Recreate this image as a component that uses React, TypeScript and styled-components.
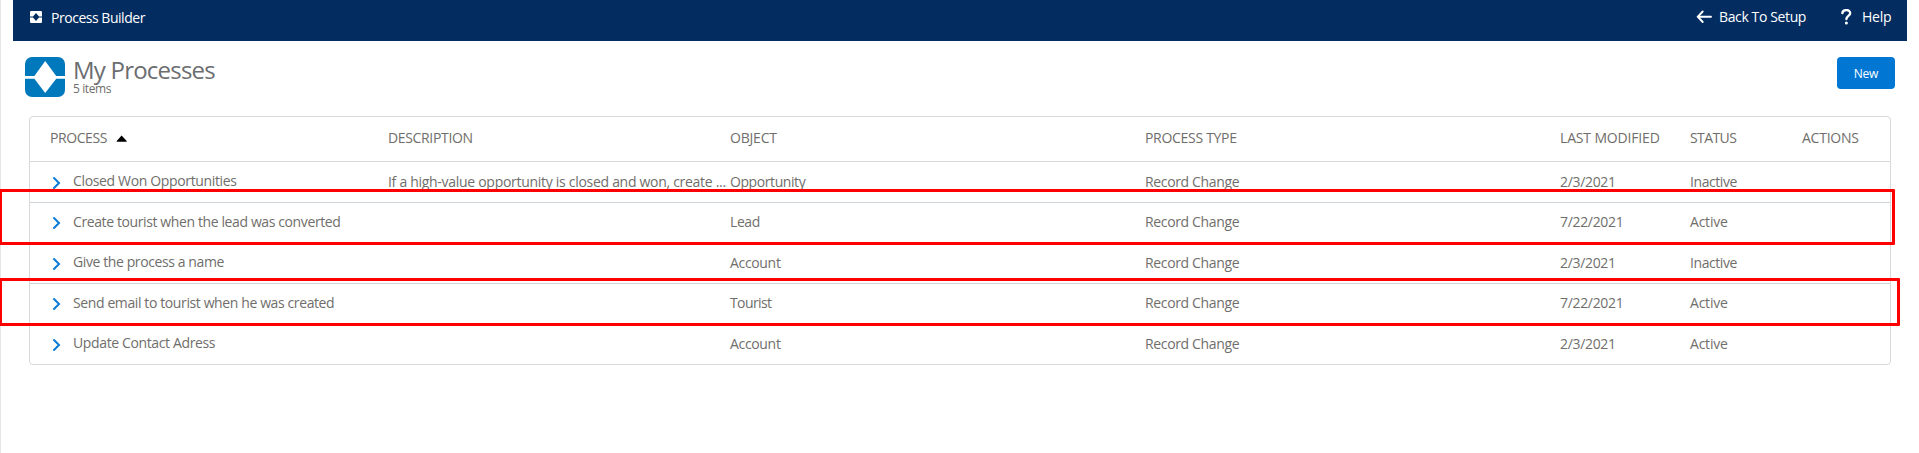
import React from "react";
import styled, { createGlobalStyle } from "styled-components";

const GlobalStyle = createGlobalStyle`
  * { box-sizing: border-box; }
  body {
    margin: 0;
    background: #fff;
    font-family: "Open Sans", "Noto Sans", sans-serif;
    font-size: 14px;
    line-height: 20px;
    color: #706e6b;
    overflow: hidden;
  }
`;

const Page = styled.div`
  position: relative;
  width: 1919px;
  height: 453px;
  padding: 0 12px;
  border-left: 1px solid #e6e6e6;
`;

/* Text run with its own tracking */
const Label = styled.span<{ $track?: number }>`
  letter-spacing: ${(p) => p.$track ?? -0.39}px;
  white-space: nowrap;
`;

const NavBar = styled.header`
  display: flex;
  justify-content: space-between;
  height: 41px;
  padding: 0 16px 0 17px;
  background: #032d60;
  color: #fff;
`;

const Brand = styled.div`
  display: flex;
  gap: 8px;
  height: 36px;
  padding-top: 8px;

  svg { margin-top: 3px; }
`;

const NavLinks = styled.nav`
  display: flex;
  padding-top: 7px;
`;

const NavLink = styled.a<{ $width: number; $gap: number }>`
  display: flex;
  gap: ${(p) => p.$gap}px;
  width: ${(p) => p.$width}px;

  svg { margin-top: 2px; flex: none; }
`;

const PageHeader = styled.section`
  display: flex;
  align-items: flex-start;
  height: 75px;
  padding: 16px 12px 0;
`;

const Titles = styled.div`
  flex: 1;
  padding-left: 8px;
`;

const Title = styled.h1`
  margin: 0;
  font-size: 24px;
  font-weight: 400;
  line-height: 26px;
  color: #6b6d70;
`;

const ItemCount = styled.p`
  margin: 0;
  font-size: 12px;
  line-height: 12px;
`;

const NewButton = styled.button`
  width: 58px;
  height: 32px;
  padding: 1px 0 0;
  border: 0;
  border-radius: 4px;
  background: #0176d3;
  color: #fff;
  font: 400 12px/31px "Open Sans", "Noto Sans", sans-serif;
`;

const Table = styled.div`
  width: 1862px;
  height: 249px;
  margin-left: 16px;
  border: 1px solid #d8d9db;
  border-radius: 4px;
`;

const columns = `
  display: grid;
  grid-template-columns: 338px 342px 415px 415px 130px 112px 1fr;
  padding-left: 20px;
`;

const HeadRow = styled.div`
  ${columns}
  height: 45px;
  padding-top: 11px;
  border-bottom: 1px solid #d8d9db;
`;

const Row = styled.div<{ $height: number; $last: boolean }>`
  ${columns}
  height: ${(p) => p.$height}px;
  border-bottom: ${(p) => (p.$last ? "0" : "1px solid #ced3d8")};
`;

const HeadCell = styled.div`
  display: flex;
  gap: 9px;

  svg { margin-top: 7px; }
`;

const NameCell = styled.div<{ $drop: number }>`
  display: flex;
  gap: 11px;
  padding: 9px 0 0 2px;

  svg { margin-top: ${(p) => 4 + p.$drop}px; }
`;

const Cell = styled.div<{ $drop: number }>`
  padding-top: ${(p) => 9 + p.$drop}px;
`;

const Highlight = styled.div<{ $top: number; $width: number; $height: number }>`
  position: absolute;
  top: ${(p) => p.$top}px;
  left: -2px;
  width: ${(p) => p.$width}px;
  height: ${(p) => p.$height}px;
  border: 3px solid #fe0000;
  border-radius: 1px;
`;

const BrandIcon = () => (
  <svg width="13" height="13" viewBox="0 0 13 13">
    <rect x="0" y="0" width="12" height="12" rx="1.3" fill="#fff" />
    <path d="M6 2 9 5.5h3v1H9L6 10 3 6.5H0v-1h3z" fill="#032d60" />
  </svg>
);

const ProcessIcon = () => (
  <svg width="40" height="40" viewBox="0 0 40 40">
    <rect width="40" height="40" rx="7" fill="#0079bc" />
    <path d="M20.2 4 31.2 19H40v2.7h-8.8L20.2 36 9.4 21.7H0V19h9.4z" fill="#fff" />
  </svg>
);

const ArrowLeft = () => (
  <svg width="16" height="16" viewBox="0 0 16 16" fill="none" stroke="#fff" strokeWidth="1.9">
    <path d="M6.7 2.5 1.8 7.7l4.9 5.3M2 7.7h13" strokeLinecap="round" />
  </svg>
);

const QuestionMark = () => (
  <svg width="11" height="16" viewBox="0 0 11 16">
    <path
      d="M1.4 4.1C1.6 .2 9.2 0 9.2 4.2c0 2.6-3.8 2.8-3.8 5.8"
      fill="none"
      stroke="#fff"
      strokeWidth="2.4"
      strokeLinecap="round"
    />
    <circle cx="5.4" cy="14" r="1.5" fill="#fff" />
  </svg>
);

const SortArrow = () => (
  <svg width="12" height="8" viewBox="0 0 12 8">
    <path d="M5.6.4 10.7 6v.8H.7V6z" fill="#000" />
  </svg>
);

const Chevron = () => (
  <svg width="10" height="14" viewBox="0 0 10 14">
    <path d="m2 2 5 5-5 5" fill="none" stroke="#0b7ad6" strokeWidth="2" strokeLinecap="round" />
  </svg>
);

type Process = {
  name: string;
  nameTrack: number;
  description?: string;
  object: string;
  objectTrack: number;
  modified: string;
  status: "Active" | "Inactive";
};

const processes: Process[] = [
  {
    name: "Closed Won Opportunities",
    nameTrack: -0.35,
    description: "If a high-value opportunity is closed and won, create ...",
    object: "Opportunity",
    objectTrack: -0.42,
    modified: "2/3/2021",
    status: "Inactive",
  },
  {
    name: "Create tourist when the lead was converted",
    nameTrack: -0.39,
    object: "Lead",
    objectTrack: -0.4,
    modified: "7/22/2021",
    status: "Active",
  },
  {
    name: "Give the process a name",
    nameTrack: -0.4,
    object: "Account",
    objectTrack: -0.33,
    modified: "2/3/2021",
    status: "Inactive",
  },
  {
    name: "Send email to tourist when he was created",
    nameTrack: -0.39,
    object: "Tourist",
    objectTrack: -0.6,
    modified: "7/22/2021",
    status: "Active",
  },
  {
    name: "Update Contact Adress",
    nameTrack: -0.37,
    object: "Account",
    objectTrack: -0.33,
    modified: "2/3/2021",
    status: "Active",
  },
];

const rowHeights = [41, 40, 41, 40, 40];

export default function App() {
  return (
    <Page>
      <GlobalStyle />
      <NavBar>
        <Brand>
          <BrandIcon />
          <Label $track={-0.47}>Process Builder</Label>
        </Brand>
        <NavLinks>
          <NavLink $width={145} $gap={7}>
            <ArrowLeft />
            <Label $track={-0.38}>Back To Setup</Label>
          </NavLink>
          <NavLink $width={50} $gap={10}>
            <QuestionMark />
            <Label $track={-0.2}>Help</Label>
          </NavLink>
        </NavLinks>
      </NavBar>

      <PageHeader>
        <ProcessIcon />
        <Titles>
          <Title>
            <Label $track={-0.78}>My Processes</Label>
          </Title>
          <ItemCount>
            <Label $track={-0.4}>5 items</Label>
          </ItemCount>
        </Titles>
        <NewButton>
          <Label $track={-0.2}>New</Label>
        </NewButton>
      </PageHeader>

      <Table>
        <HeadRow>
          <HeadCell>
            <Label $track={-0.43}>PROCESS</Label>
            <SortArrow />
          </HeadCell>
          <HeadCell><Label $track={-0.34}>DESCRIPTION</Label></HeadCell>
          <HeadCell><Label $track={-0.2}>OBJECT</Label></HeadCell>
          <HeadCell><Label $track={-0.3}>PROCESS TYPE</Label></HeadCell>
          <HeadCell><Label $track={-0.16}>LAST MODIFIED</Label></HeadCell>
          <HeadCell><Label $track={-0.6}>STATUS</Label></HeadCell>
          <HeadCell><Label $track={-0.25}>ACTIONS</Label></HeadCell>
        </HeadRow>
        {processes.map((p, i) => {
          const drop = i % 2 === 0 ? 1 : 0;
          return (
            <Row key={p.name} $height={rowHeights[i]} $last={i === processes.length - 1}>
              <NameCell $drop={drop}>
                <Chevron />
                <Label $track={p.nameTrack}>{p.name}</Label>
              </NameCell>
              <Cell $drop={drop}>
                {p.description && <Label $track={-0.29}>{p.description}</Label>}
              </Cell>
              <Cell $drop={drop}><Label $track={p.objectTrack}>{p.object}</Label></Cell>
              <Cell $drop={drop}><Label $track={-0.35}>Record Change</Label></Cell>
              <Cell $drop={drop}><Label $track={-0.33}>{p.modified}</Label></Cell>
              <Cell $drop={drop}>
                <Label $track={p.status === "Active" ? -0.22 : -0.42}>{p.status}</Label>
              </Cell>
            </Row>
          );
        })}
      </Table>

      <Highlight $top={189} $width={1896} $height={56} />
      <Highlight $top={278} $width={1901} $height={48} />
    </Page>
  );
}
